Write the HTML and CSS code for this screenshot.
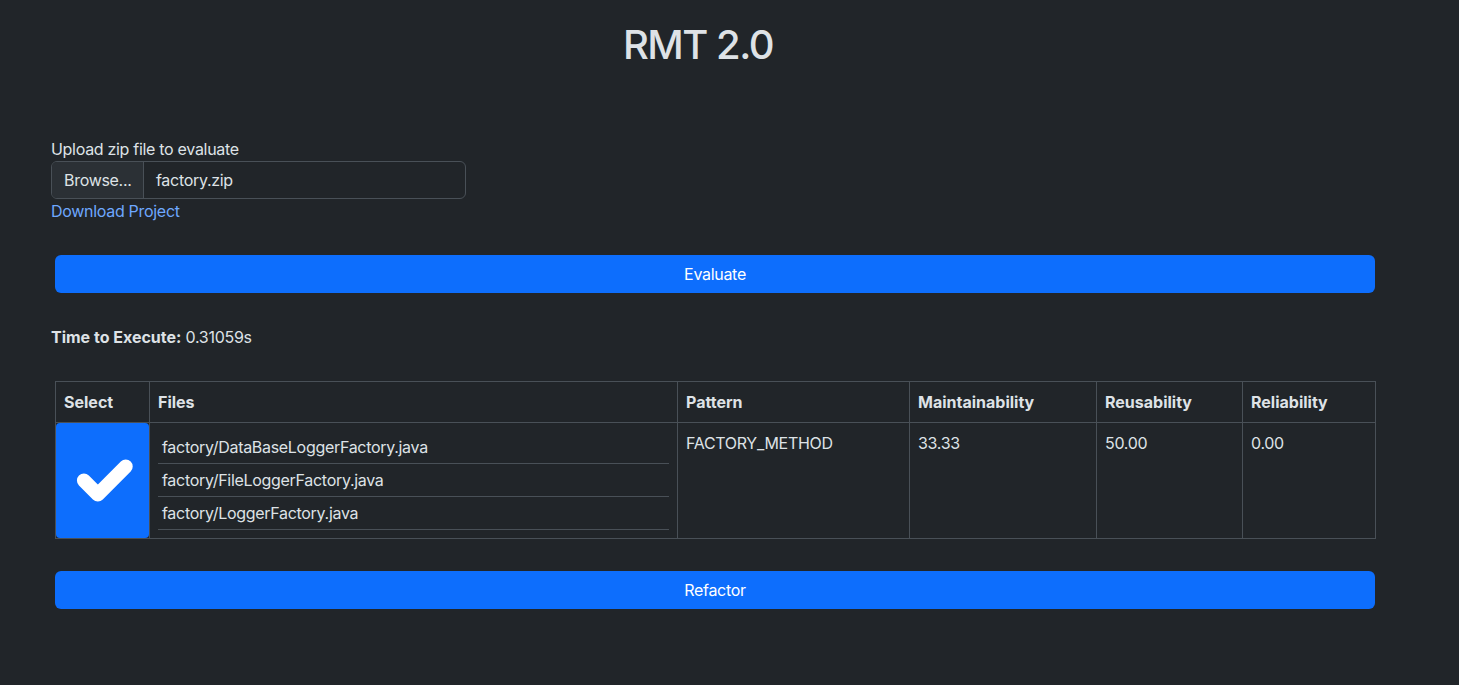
FILE: index.html
```html
<!DOCTYPE html>
<html lang="en">
<head>
<meta charset="utf-8">
<title>RMT 2.0</title>
<link rel="stylesheet" href="styles.css">
</head>
<body>
<div class="page">
  <h1 class="title">RMT 2.0</h1>
  <div class="upload">
    <label class="label">Upload zip file to evaluate</label>
    <div class="file-group">
      <span class="file-btn">Browse...</span>
      <span class="file-name">factory.zip</span>
    </div>
    <a class="link" href="#">Download Project</a>
  </div>
  <div class="actions">
    <button class="btn">Evaluate</button>
  </div>
  <p class="time"><b class="strong">Time to Execute:</b> 0.31059s</p>
  <div class="actions">
    <table class="table">
      <colgroup>
        <col class="c-select"><col class="c-files"><col class="c-pattern"><col class="c-main"><col class="c-reuse"><col class="c-rel">
      </colgroup>
      <thead>
        <tr><th>Select</th><th>Files</th><th>Pattern</th><th>Maintainability</th><th>Reusability</th><th>Reliability</th></tr>
      </thead>
      <tbody>
        <tr>
          <td class="check-cell">
            <div class="check">
              <svg viewBox="0 0 20 20" width="93" height="115"><path d="m6 10 3 3 6-6" fill="none" stroke="#fff" stroke-width="3" stroke-linecap="round" stroke-linejoin="round"/></svg>
            </div>
          </td>
          <td>
            <ul class="files">
              <li>factory/DataBaseLoggerFactory.java</li>
              <li>factory/FileLoggerFactory.java</li>
              <li>factory/LoggerFactory.java</li>
            </ul>
          </td>
          <td>FACTORY_METHOD</td>
          <td>33.33</td>
          <td>50.00</td>
          <td>0.00</td>
        </tr>
      </tbody>
    </table>
    <button class="btn refactor">Refactor</button>
  </div>
</div>
</body>
</html>
```
FILE: styles.css
```css
* { box-sizing: border-box; }
html, body { margin: 0; padding: 0; }
body {
  background: #212529;
  color: #dee2e6;
  font-family: Inter, "Liberation Sans", sans-serif;
  font-size: 16px;
  line-height: 24px;
  letter-spacing: -0.3px;
}
.page {
  width: 1328px;
  margin-left: 51px;
  padding-top: 21px;
}
.title {
  margin: 0;
  padding-right: 34px;
  text-align: center;
  font-size: 40px;
  line-height: 48px;
  font-weight: 500;
  letter-spacing: -1.5px;
}
.upload {
  margin-top: 68px;
  width: 415px;
}
.label {
  display: block;
  height: 24px;
}
.file-group {
  display: flex;
  height: 38px;
  border: 1px solid #495057;
  border-radius: 6px;
  overflow: hidden;
}
.file-btn {
  background: #2b3035;
  border-right: 1px solid #495057;
  padding: 6px 12px;
  width: 92px;
}
.file-name {
  padding: 6px 12px;
}
.link {
  display: block;
  color: #6ea8fe;
  text-decoration: none;
  width: max-content;
}
.actions {
  padding: 0 4px;
}
.btn {
  display: block;
  width: 100%;
  margin-top: 32px;
  height: 38px;
  background: #0d6efd;
  color: #fff;
  border: 0;
  border-radius: 6px;
  font: inherit;
  letter-spacing: inherit;
  cursor: pointer;
}
.time {
  margin: 32px 0 0;
}
.strong {
  font-weight: 700;
  letter-spacing: 0;
}
.table {
  margin-top: 32px;
  width: 100%;
  border-collapse: collapse;
  table-layout: fixed;
}
.c-select { width: 94px; }
.c-files { width: 528px; }
.c-pattern { width: 232px; }
.c-main { width: 187px; }
.c-reuse { width: 146px; }
.c-rel { width: 133px; }
.table th, .table td {
  border: 1px solid #495057;
  padding: 8px;
  text-align: left;
  vertical-align: top;
}
.table th {
  font-weight: 700;
  letter-spacing: 0;
}
.table td.check-cell {
  padding: 0;
}
.check {
  background: #0d6efd;
  border-radius: 4px;
  height: 115px;
  display: flex;
  align-items: center;
  justify-content: center;
}
.check svg { display: block; }
.files {
  list-style: none;
  margin: 0;
  padding: 0;
}
.files li {
  padding: 4px 4px;
  border-bottom: 1px solid #495057;
}
.refactor { margin-top: 32px; }
```
